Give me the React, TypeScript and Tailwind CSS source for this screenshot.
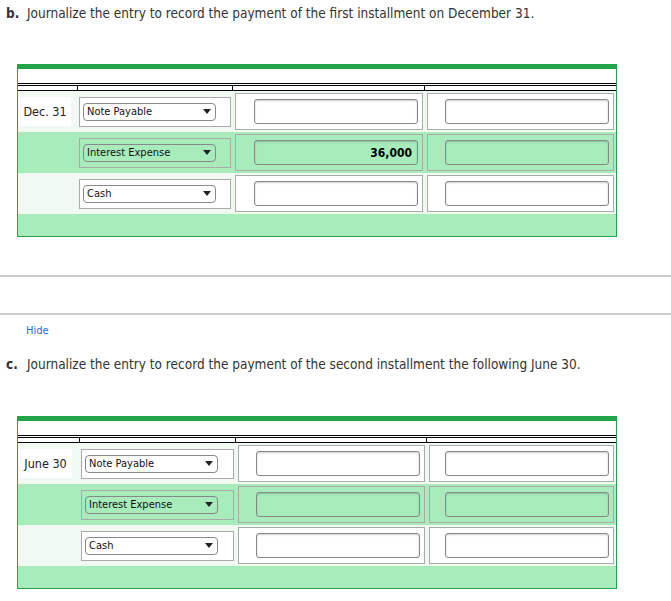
import React from "react";

type Line = { account: string; debit?: string; credit?: string };

const font = "font-['DejaVu_Sans_Condensed','DejaVu_Sans',sans-serif]";

const Dropdown = ({ label }: { label: string }) => (
  <div className="ml-[3px] flex h-[18px] w-[133px] items-center justify-between rounded-[4px] border border-[#888] pl-[3px] pr-[4px] text-[11px] text-[#111]">
    <span className="pt-[2px]">{label}</span>
    <svg width="8" height="5" viewBox="0 0 8 5">
      <path d="M0 0h8L4 5z" fill="#222" />
    </svg>
  </div>
);

const Amount = ({ value, green }: { value?: string; green: boolean }) => (
  <div
    className={`mx-[2px] flex h-[37px] items-center justify-end border border-[#aaa] pr-[4px] ${
      green ? "bg-[#a8ecbc]" : "bg-white"
    }`}
  >
    <div className="flex h-[25px] w-[164px] items-center justify-end rounded-[3px] border border-[#888] pr-[5px] text-[12px] font-bold text-black shadow-[inset_0_1px_2px_rgba(0,0,0,0.2)]">
      {value}
    </div>
  </div>
);

const Journal = ({
  date,
  lines,
  cols,
  dateWidth,
}: {
  date: string;
  lines: Line[];
  cols: string;
  dateWidth: string;
}) => (
  <div className="ml-[17px] w-[600px] border-x border-b border-t-[5px] border-[#22a447]">
    <div className="h-[14px] bg-white" />
    <div className={`grid h-[8px] border-t-[3px] border-b border-double border-black ${cols}`}>
      <div className="border-r border-black" />
      <div className="border-r border-black" />
      <div className="border-r border-black" />
      <div />
    </div>
    {lines.map((line, i) => {
      const green = i % 2 === 1;
      return (
        <div
          key={line.account}
          className={`grid h-[41px] items-center ${cols} ${green ? "bg-[#a8ecbc]" : "bg-[#f0faf2]"}`}
        >
          <div>
            {i === 0 && (
              <div
                className={`ml-[1px] flex h-[29px] items-center justify-center bg-white pt-[1px] text-[12.5px] text-[#222] ${dateWidth}`}
              >
                {date}
              </div>
            )}
          </div>
          <div
            className={`ml-[1px] mr-[2px] flex h-[30px] items-center border border-[#aaa] ${
              green ? "bg-[#a8ecbc]" : "bg-white"
            }`}
          >
            <Dropdown label={line.account} />
          </div>
          <Amount value={line.debit} green={green} />
          <Amount value={line.credit} green={green} />
        </div>
      );
    })}
    <div className="h-[22px] bg-[#a8ecbc]" />
  </div>
);

const lines: Line[] = [
  { account: "Note Payable" },
  { account: "Interest Expense", debit: "36,000" },
  { account: "Cash" },
];

const lines2: Line[] = [
  { account: "Note Payable" },
  { account: "Interest Expense" },
  { account: "Cash" },
];

export default function App() {
  return (
    <div className={`h-[601px] w-[671px] overflow-hidden bg-white ${font}`}>
      <div className="mt-[4px] flex h-[18px] items-center pl-[6px] text-[13.5px] text-[#333]">
        <span className="w-[21px] font-bold">b.</span>
        <span>Journalize the entry to record the payment of the first installment on December 31.</span>
      </div>
      <div className="mt-[42px]">
        <Journal date="Dec. 31" lines={lines} cols="grid-cols-[60px_155px_192px_191px]" dateWidth="w-[52px]" />
      </div>
      <div className="mt-[38px] h-[2px] bg-[#ccc]" />
      <div className="mt-[36px] h-[2px] bg-[#ccc]" />
      <div className="mt-[8px] h-[16px] pl-[26px] text-[11px] leading-[16px] text-[#1a6fd8]">Hide</div>
      <div className="mt-[16px] flex h-[18px] items-center pl-[6px] text-[13.5px] text-[#333]">
        <span className="w-[21px] font-bold">c.</span>
        <span>Journalize the entry to record the payment of the second installment the following June 30.</span>
      </div>
      <div className="mt-[43px]">
        <Journal date="June 30" lines={lines2} cols="grid-cols-[62px_156px_191px_189px]" dateWidth="w-[53px]" />
      </div>
    </div>
  );
}
